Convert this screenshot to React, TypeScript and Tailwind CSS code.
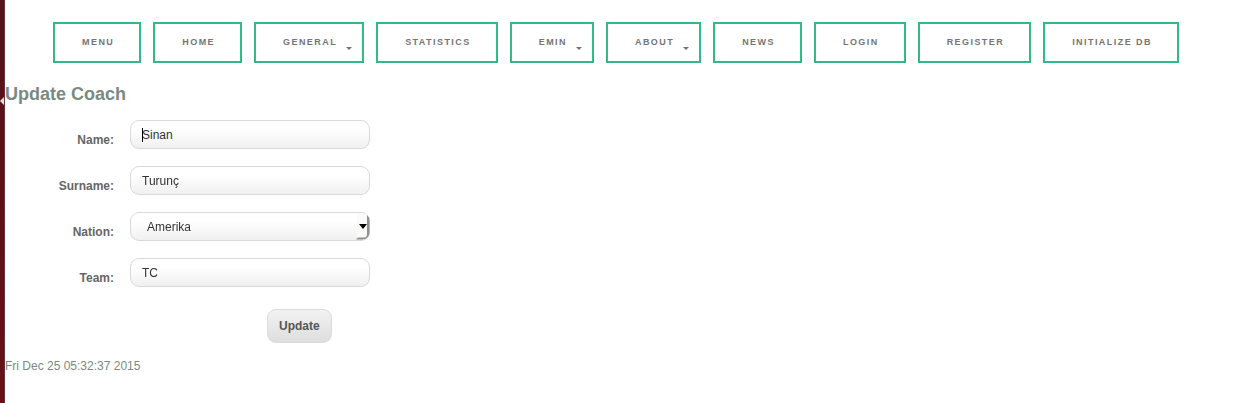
import { useEffect, useRef } from "react";
import type { ReactNode } from "react";

type NavItem = { label: string; menu?: boolean };

const navItems: NavItem[] = [
  { label: "MENU" },
  { label: "HOME" },
  { label: "GENERAL", menu: true },
  { label: "STATISTICS" },
  { label: "EMIN", menu: true },
  { label: "ABOUT", menu: true },
  { label: "NEWS" },
  { label: "LOGIN" },
  { label: "REGISTER" },
  { label: "INITIALIZE DB" },
];

const control =
  "block h-[29px] w-full rounded-[9px] border border-[#d9d9d9] bg-linear-to-b from-white from-30% to-[#f0f0f0] text-xs text-[#333333] outline-none";

function NavLink({ label, menu }: NavItem) {
  return (
    <a
      href="#"
      className="relative flex h-[41px] items-center border-2 border-[#33b986] pr-[25px] pl-[27px] text-[9px] font-bold tracking-[0.16em] whitespace-nowrap text-[#757575]"
    >
      {label}
      {menu && (
        <svg className="absolute right-[10px] bottom-[11px]" width="6" height="3" viewBox="0 0 6 3" aria-hidden="true">
          <path d="M0 0h6L3 3z" fill="#757575" />
        </svg>
      )}
    </a>
  );
}

function Field({ id, label, children }: { id: string; label: string; children: ReactNode }) {
  return (
    <div className="flex gap-4">
      <label htmlFor={id} className="w-[109px] shrink-0 pt-3 text-right text-xs font-bold text-[#666666]">
        {label}
      </label>
      <div className="relative w-60">{children}</div>
    </div>
  );
}

export default function App() {
  const nameRef = useRef<HTMLInputElement>(null);

  useEffect(() => {
    nameRef.current?.focus();
    nameRef.current?.setSelectionRange(0, 0);
  }, []);

  return (
    <div className="flex min-h-screen bg-white font-['Liberation_Sans',Arial,sans-serif]">
      <aside className="relative w-[5px] shrink-0 border-r border-[#6d3037] bg-linear-to-b from-[#55131a] via-[#5c1118] to-[#641318]">
        <svg className="absolute top-[97px] left-0" width="4" height="8" viewBox="0 0 4 8" aria-hidden="true">
          <path d="M4 0v8L0 4z" fill="#dddddd" />
        </svg>
      </aside>
      <div className="min-w-0 flex-1">
        <nav className="flex flex-wrap gap-x-3 gap-y-2 pt-[22px] pl-12">
          {navItems.map((item) => (
            <NavLink key={item.label} {...item} />
          ))}
        </nav>
        <main>
          <h1 className="mt-[17px] text-lg leading-7 font-bold text-[#798a82]">Update Coach</h1>
          <form className="mt-3 flex flex-col gap-[17px]" onSubmit={(e) => e.preventDefault()}>
            <Field id="name" label="Name:">
              <input ref={nameRef} id="name" defaultValue="Sinan" className={`${control} px-[11px]`} />
              <span className="absolute top-2 left-3 h-[14px] w-px bg-black" />
            </Field>
            <Field id="surname" label="Surname:">
              <input id="surname" defaultValue="Turunç" className={`${control} px-[11px]`} />
            </Field>
            <Field id="nation" label="Nation:">
              <select id="nation" className={`${control} appearance-none px-4`}>
                <option>Amerika</option>
              </select>
              <svg
                className="pointer-events-none absolute top-0 right-0"
                width="14"
                height="29"
                viewBox="0 0 14 29"
                aria-hidden="true"
              >
                <path d="M1 2h9l2 3v20l-2 1H1z" fill="#fafaf8" />
                <path d="M11 3q2.500 2 2.500 6v11q0 7-7 7.500H0l2-2h6q3 0 3-3z" fill="#8f8f8f" />
                <path d="M3 12h8l-4 5z" fill="#000000" />
              </svg>
            </Field>
            <Field id="team" label="Team:">
              <input id="team" defaultValue="TC" className={`${control} px-[11px]`} />
            </Field>
            <div className="mt-[5px] pl-[262px]">
              <button
                type="submit"
                className="block h-[34px] rounded-[9px] border border-[#dcdcdc] bg-linear-to-b from-[#f2f2f2] to-[#dedede] px-[11px] text-xs font-bold text-[#555555]"
              >
                Update
              </button>
            </div>
          </form>
          <p className="mt-[15px] text-xs text-[#798a82]">Fri Dec 25 05:32:37 2015</p>
        </main>
      </div>
    </div>
  );
}
